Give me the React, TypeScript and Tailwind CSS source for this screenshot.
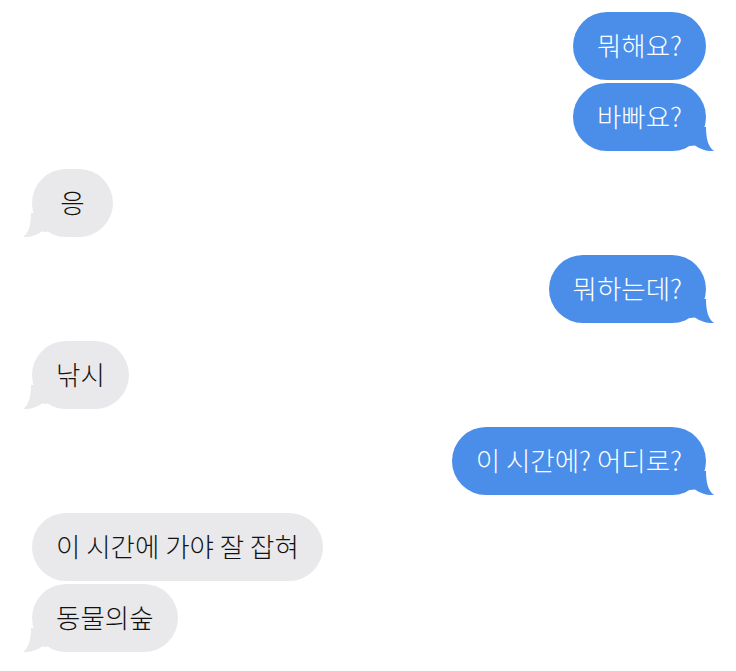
import React from 'react';

type Msg = { text: string; me: boolean; tail: boolean; gapTop: number };

const messages: Msg[] = [
  { text: '뭐해요?', me: true, tail: false, gapTop: 0 },
  { text: '바빠요?', me: true, tail: true, gapTop: 3 },
  { text: '응', me: false, tail: true, gapTop: 18 },
  { text: '뭐하는데?', me: true, tail: true, gapTop: 18 },
  { text: '낚시', me: false, tail: true, gapTop: 18 },
  { text: '이 시간에? 어디로?', me: true, tail: true, gapTop: 18 },
  { text: '이 시간에 가야 잘 잡혀', me: false, tail: false, gapTop: 18 },
  { text: '동물의숲', me: false, tail: true, gapTop: 3 },
];

// bubble tail, drawn for the right side and mirrored for the left
const Tail: React.FC<{ me: boolean }> = ({ me }) => (
  <svg
    viewBox="0 0 24 24"
    className={
      me
        ? 'absolute -right-[8px] bottom-0 h-[24px] w-[24px] fill-[#4a8ee9]'
        : 'absolute -left-[9px] bottom-0 h-[24px] w-[24px] -scale-x-100 fill-[#e9e9eb]'
    }
  >
    <path d="M0 0 H16 C16 11 18 20 24 24 C17 24.5 11 22.5 5 18.5 L0 19 Z" />
  </svg>
);

const Bubble: React.FC<{ msg: Msg }> = ({ msg }) => (
  <div
    className={msg.me ? 'flex justify-end pr-[30px]' : 'flex justify-start pl-[32px]'}
    style={{ marginTop: msg.gapTop }}
  >
    <div
      className={
        msg.me
          ? 'relative flex h-[68px] min-w-[81px] items-center justify-center rounded-[34px] bg-[#4a8ee9] px-[24px] text-white'
          : 'relative flex h-[68px] min-w-[81px] items-center justify-center rounded-[34px] bg-[#e9e9eb] px-[24px] text-[#111]'
      }
    >
      {msg.tail && <Tail me={msg.me} />}
      <span className="relative whitespace-pre pb-[1px] text-[26.5px] font-light leading-none">{msg.text}</span>
    </div>
  </div>
);

export default function App() {
  return (
    <div
      className="h-[671px] w-[736px] overflow-hidden bg-white pt-[12px]"
      style={{ fontFamily: '"Noto Sans CJK KR", "Noto Sans", sans-serif' }}
    >
      {messages.map((m, i) => (
        <Bubble key={i} msg={m} />
      ))}
    </div>
  );
}
